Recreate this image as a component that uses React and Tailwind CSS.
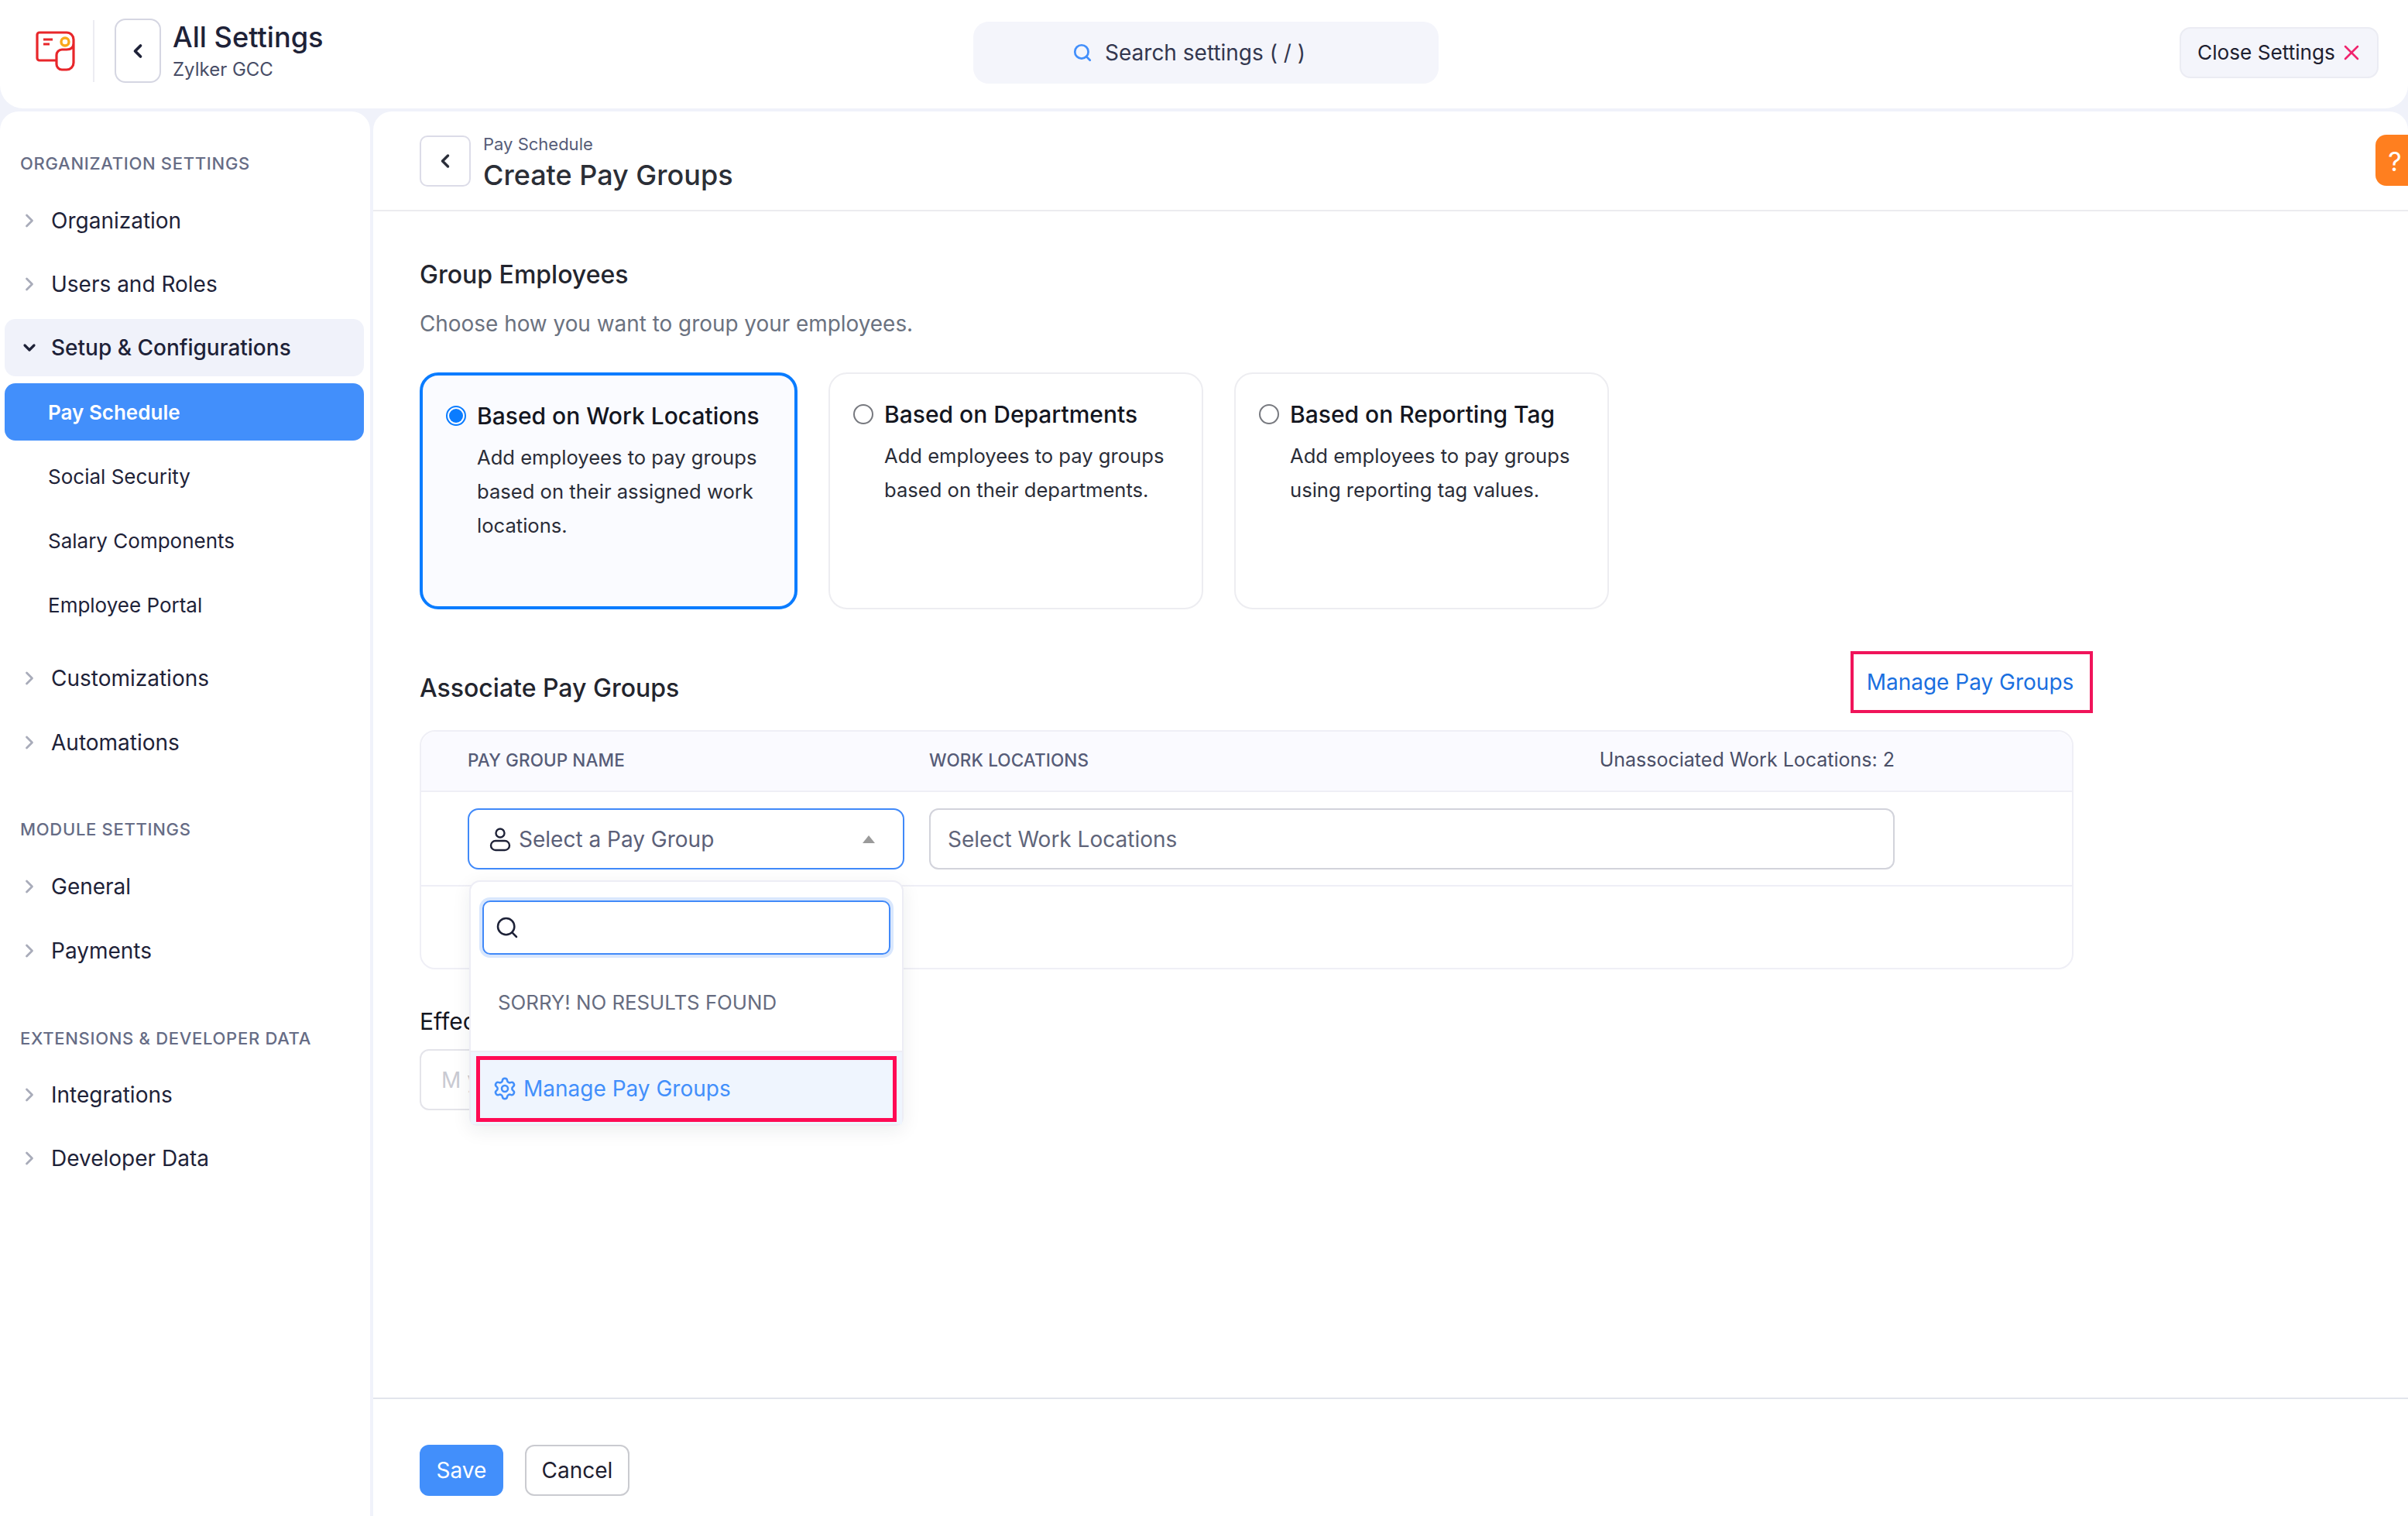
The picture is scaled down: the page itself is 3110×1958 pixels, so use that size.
import React from "react";
import { ChevronDown, ChevronLeft, ChevronRight, Search, Settings, X } from "lucide-react";

const Logo = () => (
  <svg width="52" height="52" viewBox="0 0 52 52" fill="none" className="shrink-0">
    <path d="M27 38H5a3 3 0 0 1-3-3V5a3 3 0 0 1 3-3h35a9 9 0 0 1 9 9v30a9 9 0 0 1-9 9h-6a7 7 0 0 1-7-7V31a7 7 0 0 1 7-7h6c5 0 9-2 9-8" stroke="#e8262a" strokeWidth="3.2" strokeLinejoin="round" />
    <path d="M10 11h12M10 17h8" stroke="#e8262a" strokeWidth="2.8" />
    <circle cx="38" cy="14" r="5" stroke="#f9a81a" strokeWidth="3.4" />
  </svg>
);

const UserIcon = () => (
  <svg width="28" height="32" viewBox="0 0 28 32" fill="none" className="shrink-0">
    <circle cx="14" cy="8" r="5.5" stroke="#1e2238" strokeWidth="2.4" />
    <rect x="2" y="18" width="24" height="12" rx="6" stroke="#1e2238" strokeWidth="2.4" />
  </svg>
);

const NavItem = ({ label, open }) => (
  <div className={`ml-[6px] mr-[8px] flex h-[74px] items-center rounded-[14px] pl-[18px] text-[28px] text-[#1e2238] ${open ? "bg-[#f0f2fa] font-medium" : ""}`}>
    {open ? (
      <ChevronDown size={24} strokeWidth={3.2} className="ml-[2px] mr-[16px] text-[#1e2238]" />
    ) : (
      <ChevronRight size={28} strokeWidth={2.4} className="mr-[14px] text-[#a9acba]" />
    )}
    {label}
  </div>
);

const SubItem = ({ label, active }) => (
  <div className={`ml-[6px] mr-[8px] flex h-[74px] items-center rounded-[14px] pl-[56px] text-[26px] ${active ? "bg-[#428ffb] font-semibold text-white" : "text-[#1e2238]"}`}>
    {label}
  </div>
);

const Heading = ({ children }) => (
  <div className="flex h-[30px] items-center pl-[26px] text-[22px] font-medium tracking-[0.7px] text-[#666c85]">
    {children}
  </div>
);

const Sidebar = () => (
  <aside className="flex w-[478px] shrink-0 flex-col rounded-t-[24px] bg-white pt-[52px]">
    <Heading>ORGANIZATION SETTINGS</Heading>
    <div className="mt-[22px] flex flex-col gap-[8px]">
      <NavItem label="Organization" />
      <NavItem label="Users and Roles" />
      <NavItem label="Setup & Configurations" open />
    </div>
    <div className="mt-[9px] flex flex-col gap-[9px]">
      <SubItem label="Pay Schedule" active />
      <SubItem label="Social Security" />
      <SubItem label="Salary Components" />
      <SubItem label="Employee Portal" />
    </div>
    <div className="mt-[21px] flex flex-col gap-[9px]">
      <NavItem label="Customizations" />
      <NavItem label="Automations" />
    </div>
    <div className="mt-[60px]">
      <Heading>MODULE SETTINGS</Heading>
    </div>
    <div className="mt-[22px] flex flex-col gap-[9px]">
      <NavItem label="General" />
      <NavItem label="Payments" />
    </div>
    <div className="mt-[61px]">
      <Heading>EXTENSIONS & DEVELOPER DATA</Heading>
    </div>
    <div className="mt-[21px] flex flex-col gap-[8px]">
      <NavItem label="Integrations" />
      <NavItem label="Developer Data" />
    </div>
  </aside>
);

const OptionCard = ({ title, lines, selected, width }) => (
  <div className={`${width} h-[306px] rounded-[24px] pl-[30px] pt-[34px] ${selected ? "border-[4px] border-[#0a7cff] bg-[#fafbff]" : "border-2 border-[#ededf1] bg-white"}`}>
    <div className="flex h-[36px] items-center">
      {selected ? (
        <span className="flex h-[26px] w-[26px] items-center justify-center rounded-full border-2 border-[#0a7cff]">
          <span className="h-[18px] w-[18px] rounded-full bg-[#0a7cff]" />
        </span>
      ) : (
        <span className="h-[26px] w-[26px] rounded-full border-2 border-[#77797f]" />
      )}
      <span className="ml-[14px] text-[30px] font-medium text-[#14161f]">{title}</span>
    </div>
    <div className="mt-[14px] pl-[40px] text-[25.6px] leading-[44px] text-[#2a2d38]">
      {lines.map((line) => (
        <div key={line}>{line}</div>
      ))}
    </div>
  </div>
);

const PayGroupSelect = () => (
  <div className="relative w-[564px] self-start">
    <div className="flex h-[79px] items-center rounded-[14px] border-[2.5px] border-[#4089f9] pl-[26px] pr-[36px]">
      <UserIcon />
      <span className="ml-[10px] text-[28px] text-[#5b6078]">Select a Pay Group</span>
      <span className="ml-auto h-0 w-0 border-x-[8px] border-b-[10px] border-x-transparent border-b-[#9a9a9a]" />
    </div>
    <div className="absolute left-[2px] top-full z-10 mt-[14px] flex h-[317px] w-[561px] flex-col rounded-t-[14px] rounded-b-[10px] border-2 border-[#ededf5] bg-white shadow-[0_6px_24px_rgba(30,34,56,0.08)]">
      <div className="mx-[15px] mt-[24px] flex h-[70px] items-center rounded-[10px] border-[2.5px] border-[#4089f9] pl-[14px] shadow-[0_0_0_4px_#d9e7fd]">
        <Search size={32} strokeWidth={1.9} className="text-[#1e2238]" />
      </div>
      <div className="flex flex-1 items-center pl-[35px] text-[25.8px] text-[#666c80]">SORRY! NO RESULTS FOUND</div>
      <div className="border-t-2 border-[#ededf5] bg-[#eff5fe] px-[7px] pb-[3px] pt-[5px]">
        <div className="flex h-[85px] items-center border-[5px] border-[#ff0a54] bg-[#eff5fe] pb-[2px] pl-[16px] text-[28px] text-[#428ffb]">
          <Settings size={32} strokeWidth={1.9} className="mr-[8px]" />
          Manage Pay Groups
        </div>
      </div>
    </div>
  </div>
);

const PayGroupsTable = () => (
  <div className="mt-[22px] flex h-[309px] flex-col rounded-[20px] border-2 border-[#efeff6]">
    <div className="flex h-[78px] items-center rounded-t-[20px] border-b-2 border-[#efeff6] bg-[#fafaff] pb-[3px] pl-[60px] text-[22.5px] font-medium tracking-[0.1px] text-[#565c78]">
      <div className="w-[596px]">PAY GROUP NAME</div>
      <div className="flex w-[1247px] items-center justify-between">
        <span>WORK LOCATIONS</span>
        <span className="text-[25px] font-normal tracking-normal text-[#4a4f68]">Unassociated Work Locations: 2</span>
      </div>
    </div>
    <div className="flex h-[122px] gap-[32px] border-b-2 border-[#efeff6] pl-[60px] pt-[21px]">
      <PayGroupSelect />
      <div className="flex h-[79px] w-[1247px] items-center rounded-[12px] border-2 border-[#d2d3db] pl-[22px] text-[28px] text-[#60657a]">
        Select Work Locations
      </div>
    </div>
  </div>
);

export default function App() {
  return (
    <div className="flex h-[1958px] w-[3110px] flex-col overflow-hidden bg-[#f0f2fa] font-[Inter,sans-serif]">
      <header className="flex h-[140px] shrink-0 items-center rounded-b-[30px] bg-white pb-[4px]">
        <div className="flex w-[1257px] items-center pb-[5px] pl-[46px]">
          <Logo />
          <div className="ml-[22px] h-[80px] w-[2px] bg-[#ececf2]" />
          <button type="button" className="ml-[26px] flex h-[83px] w-[60px] items-center justify-center rounded-[14px] border-2 border-[#d5d6e2]">
            <ChevronLeft size={28} strokeWidth={3.2} className="text-[#1e2238]" />
          </button>
          <div className="ml-[15px]">
            <div className="text-[36.2px] font-medium leading-[44px] text-[#1e2238]">All Settings</div>
            <div className="mt-[4px] text-[24px] leading-[32px] text-[#484d66]">Zylker GCC</div>
          </div>
        </div>
        <div className="flex h-[80px] w-[601px] items-center justify-center rounded-[20px] bg-[#f4f5fb] pr-[44px] text-[28px] text-[#33374f]">
          <Search size={26} strokeWidth={2.5} className="mr-[16px] text-[#428ffb]" />
          Search settings ( / )
        </div>
        <button type="button" className="ml-auto mr-[38px] flex h-[66px] w-[257px] items-center rounded-[14px] border-2 border-[#ebecf3] bg-[#f4f5fb] pl-[21px] text-[26.2px] text-[#1e2030]">
          Close Settings
          <X size={32} strokeWidth={1.9} className="ml-[5px] text-[#f0246e]" />
        </button>
      </header>

      <div className="mt-[4px] flex flex-1 gap-[4px]">
        <Sidebar />
        <main className="relative flex flex-1 flex-col rounded-t-[24px] bg-white">
          <div className="absolute right-0 top-[30px] flex h-[66px] w-[42px] items-center justify-center rounded-l-[14px] bg-[#ff7f1f] pl-[8px] pt-[2px] text-[34px] text-white">?</div>

          <div className="flex h-[129px] shrink-0 items-center border-b-2 border-[#ececef] pl-[60px]">
            <button type="button" className="flex h-[66px] w-[66px] items-center justify-center rounded-[10px] border-2 border-[#dcdce8]">
              <ChevronLeft size={28} strokeWidth={3} className="text-[#2b2e3a]" />
            </button>
            <div className="ml-[16px] pt-[6px]">
              <div className="text-[22px] leading-[28px] text-[#565c78]">Pay Schedule</div>
              <div className="mt-[2px] text-[36px] font-medium leading-[48px] text-[#2b2e36]">Create Pay Groups</div>
            </div>
          </div>

          <div className="flex-1 px-[60px] pt-[62px]">
            <div className="text-[32px] font-medium leading-[40px] text-[#23252e]">Group Employees</div>
            <div className="mt-[23px] text-[27.9px] leading-[40px] text-[#6b7280]">Choose how you want to group your employees.</div>

            <div className="mt-[43px] flex gap-[40px]">
              <OptionCard
                selected
                width="w-[488px]"
                title="Based on Work Locations"
                lines={["Add employees to pay groups", "based on their assigned work", "locations."]}
              />
              <OptionCard width="w-[484px]" title="Based on Departments" lines={["Add employees to pay groups", "based on their departments."]} />
              <OptionCard width="w-[484px]" title="Based on Reporting Tag" lines={["Add employees to pay groups", "using reporting tag values."]} />
            </div>

            <div className="mt-[54px] flex w-[2161px] items-start justify-between">
              <div className="pt-[28px] text-[32px] font-medium leading-[40px] text-[#23252e]">Associate Pay Groups</div>
              <div className="flex h-[80px] w-[313px] items-center justify-center border-[4px] border-[#f0145a] pr-[4px] text-[28px] text-[#1a6fe0]">
                Manage Pay Groups
              </div>
            </div>

            <div className="w-[2136px]">
              <PayGroupsTable />
            </div>

            <div className="mt-[47px] text-[30px] leading-[40px] text-[#14161f]">Effective From</div>
            <div className="mt-[16px] flex h-[79px] w-[540px] items-center rounded-[12px] border-2 border-[#e4e4ea] pl-[26px] text-[28px] text-[#c9cad2]">
              M y
            </div>
          </div>

          <div className="h-[153px] shrink-0 border-t-2 border-[#e2e5ec] pl-[60px] pt-[59px]">
            <div className="flex gap-[28px]">
              <button type="button" className="h-[66px] w-[108px] rounded-[12px] bg-[#428ffb] text-[28px] text-white">Save</button>
              <button type="button" className="h-[66px] w-[135px] rounded-[12px] border-2 border-[#cacbd0] text-[28px] text-[#1e2030]">Cancel</button>
            </div>
          </div>
        </main>
      </div>
    </div>
  );
}
